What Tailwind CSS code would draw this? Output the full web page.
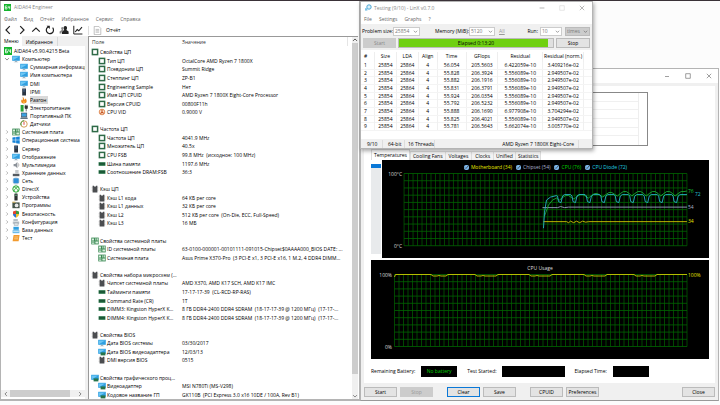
<!DOCTYPE html>
<html lang="ru">
<head>
    <meta charset="UTF-8">
    <meta name="viewport" content="width=device-width, initial-scale=1.0">
    <title>AIDA64 Engineer</title>
    <script src="https://cdn.jsdelivr.net/npm/@tailwindcss/browser@4"></script>
</head>
<body class="relative h-screen overflow-hidden border-t border-[#3a3238] bg-[#fcfcfc] font-['Open_Sans','Noto_Sans',sans-serif] text-[5px] leading-[8px] text-black">

    <!-- icons -->
    <svg class="hidden" aria-hidden="true">
        <symbol id="logo" viewBox="0 0 8 8"><rect width="8" height="8" fill="#14b42c"/><path d="M3.4 2.2H1.5v3.6h1.9V4H1.5M4.8 2.2V4.2H6.8M6.6 2.2V6" fill="none" stroke="#fff" stroke-width=".8"/></symbol>
        <symbol id="cpu" viewBox="0 0 8 8"><rect x="1.4" y="1.4" width="5.2" height="5.2" fill="#fff" stroke="#2f6b48" stroke-width="1.5"/></symbol>
        <symbol id="vid" viewBox="0 0 8 8"><circle cx="4" cy="4" r="2.8" fill="#fbe3cf" stroke="#d9763a" stroke-width=".8"/><path d="M4 1.8v2.4L2.4 5.6M4 4.2l1.8 1.2" fill="none" stroke="#c4501c" stroke-width="1.1"/></symbol>
        <symbol id="ram" viewBox="0 0 8 8"><rect x=".6" y="2.2" width="6.8" height="3.6" fill="#1f6d40"/><path d="M1.4 3.2h1.2v1.4H1.400zM3.400 3.200h1.200v1.400H3.400zM5.400 3.200h1.200v1.400H5.400z" fill="#173a2a"/></symbol>
        <symbol id="chip" viewBox="0 0 8 8"><path d="M1.600 .8H3v.8h2V.8h1.400v6.600H1.600z" fill="#4b4d50"/><path d="M1.600 2.400H.8M1.600 4H.8M1.600 5.600H.8M6.400 2.400h.8M6.400 4h.8M6.400 5.600h.8" stroke="#8c8c8c" stroke-width=".7"/></symbol>
        <symbol id="board" viewBox="0 0 8 8"><rect x=".3" y=".6" width="7.4" height="6.8" fill="#3c8a55"/><path d="M1 1.4h2v2H1zM4.4 1.2h1v2.4h-1zM6.2 1.2h.9v2.4h-.9zM1 4.6h2.4v.8H1zM1 6.1h2.4v.7H1zM4.4 4.6h2.7v2H4.4z" fill="#d9efdf"/></symbol>
        <symbol id="monitor" viewBox="0 0 8 8"><rect x=".2" y=".8" width="7.6" height="5" fill="#2f9fe0"/><path d="M.8 1.4h6.4L.8 5.2z" fill="#6cc6f4"/><path d="M3 5.8h2v.9h1.2v.6H1.8v-.6H3z" fill="#9fb3c0"/></symbol>
        <symbol id="gpu" viewBox="0 0 8 8"><rect x=".2" y=".8" width="7.6" height="5" fill="#2f9fe0"/><path d="M.8 1.4h6.4L.8 5.2z" fill="#6cc6f4"/><rect x="2.6" y="4.4" width="4.8" height="3" fill="#28744a"/></symbol>
        <symbol id="server" viewBox="0 0 8 8"><rect x="2.2" y=".5" width="3.8" height="7" fill="#2a3542"/><path d="M3 1.7h2.2M3 3h2.2" stroke="#5f88b8" stroke-width=".6"/></symbol>
        <symbol id="flame" viewBox="0 0 8 8"><path d="M2.6.8C4 2 4.2 3 4 4l1.6-1.6C7.4 4.4 7 7.4 4 7.4S.8 5 1.6 3.4l.9 1C3 3.2 3 2 2.6.8z" fill="#f08a1c"/><path d="M4 5c1 1 .8 2 0 2s-1.2-1 0-2z" fill="#ffd65a"/></symbol>
        <symbol id="power" viewBox="0 0 8 8"><rect x=".6" y="1" width="3" height="6.6" fill="#2ba33a"/><path d="M5 2h2.4v2.4H5zM5.3.8v1.4M7 .8v1.4M6.2 4v3.4" fill="#333" stroke="#333" stroke-width=".7"/></symbol>
        <symbol id="laptop" viewBox="0 0 8 8"><rect x="1.4" y="1" width="5.4" height="3.8" fill="#3aa0e0" stroke="#3b4f60" stroke-width=".6"/><path d="M1 5.2h6.2l.7 1.8H.2z" fill="#607484"/></symbol>
        <symbol id="sensor" viewBox="0 0 8 8"><circle cx="4" cy="4" r="3.2" fill="#fff" stroke="#c9862e" stroke-width=".8"/><path d="M1.1 5.4A3.2 3.2 0 0 1 4 .8" fill="none" stroke="#3c9a44"/><path d="M4 4.8V2" stroke="#d33" stroke-width=".9"/></symbol>
        <symbol id="windows" viewBox="0 0 8 8"><path d="M.4 1.5 3.6 1v2.8H.4zM4.1.9 7.7.4v3.4H4.1zM.4 4.3h3.2v2.8l-3.2-.5zM4.1 4.3h3.6v3.4l-3.6-.5z" fill="#1583d8"/></symbol>
        <symbol id="sound" viewBox="0 0 8 8"><path d="M1.6 3h1.6L5.4.9v6.4L3.2 5.2H1.6z" fill="#8c9299"/><path d="M6.4 2.4q1 1.6 0 3.2" fill="none" stroke="#888" stroke-width=".6"/></symbol>
        <symbol id="disk" viewBox="0 0 8 8"><path d="M3.2 1h3.4v3.4H3.2z" fill="#c4c8cc"/><path d="M.8 4.8h6.6v2.4H.8z" fill="#555b61"/></symbol>
        <symbol id="net" viewBox="0 0 8 8"><circle cx="4" cy="4" r="3.4" fill="#a9c4dc"/><rect x="1.6" y="1.4" width="5" height="4.6" fill="#2f8fd8"/></symbol>
        <symbol id="xbox" viewBox="0 0 8 8"><circle cx="4" cy="4" r="3.2" fill="#fff" stroke="#22a52c" stroke-width="1"/><path d="M2 6.2C2.4 4.6 3.6 3.2 4 3c.4.2 1.6 1.6 2 3.2M2 1.8 4 3l2-1.2" fill="none" stroke="#22a52c" stroke-width=".8"/></symbol>
        <symbol id="device" viewBox="0 0 8 8"><rect x="2.4" y=".5" width="3.2" height="7" rx=".6" fill="#2c3130"/><rect x="3.2" y="1.6" width="1.6" height="1.4" fill="#5ca07c"/></symbol>
        <symbol id="programs" viewBox="0 0 8 8"><rect x=".4" y="1.4" width="7.2" height="5.8" fill="#45544a"/><circle cx="4.6" cy="4.4" r="1.9" fill="#e8e8e8"/><path d="M.4 1.2h3" stroke="#caa64a"/></symbol>
        <symbol id="shield" viewBox="0 0 8 8"><path d="M4 .4 1 1.4V4h3z" fill="#e2452f"/><path d="M4 .4 7 1.4V4H4z" fill="#3a9b3e"/><path d="M1 4h3v3.8C2 6.8 1 5.6 1 4z" fill="#2c72cf"/><path d="M7 4H4v3.8C6 6.8 7 5.6 7 4z" fill="#f2c230"/></symbol>
        <symbol id="config" viewBox="0 0 8 8"><path d="M1.4 1h4.4v2H1.4zM.8 3.4h6.4v2.4H.8z" fill="#b6bfc6"/><path d="M2.2 5h4v2.4h-4z" fill="#dfe5e8" stroke="#8b979f" stroke-width=".5"/></symbol>
        <symbol id="database" viewBox="0 0 8 8"><path d="M1.4.8h5.4v3H1.4z" fill="#2f9fe0"/><path d="M.6 4.2h6.8v3H.6z" fill="#62b7ea"/><path d="M1.2 5.6h5.6" stroke="#fff" stroke-width=".6"/></symbol>
        <symbol id="bench" viewBox="0 0 8 8"><path d="M1.6 1h6L6.6 7.2H.6z" fill="#f29a2e"/><path d="M2.4 3h3.8M2.2 4.8H6" stroke="#fbd9a6" stroke-width=".7"/></symbol>
        <symbol id="right" viewBox="0 0 8 8"><path d="m3 1.8 2.2 2.2L3 6.2" fill="none" stroke="#999" stroke-width=".9"/></symbol>
        <symbol id="down" viewBox="0 0 8 8"><path d="m1.4 2.8 2.6 2.6 2.6-2.6" fill="none" stroke="#555" stroke-width=".9"/></symbol>
        <symbol id="up" viewBox="0 0 8 8"><path d="m1.4 5.2 2.6-2.6 2.6 2.6" fill="none" stroke="#444" stroke-width="1.2"/></symbol>
    </svg>

    <!-- AIDA64 -->
    <main class="absolute top-0 bottom-[4px] left-0 flex w-1/2 flex-col border-r border-b-2 border-l border-[#b4b4b4] bg-white pr-px">
        <header class="flex h-[12px] items-center gap-[3px] pl-[3px] text-[#888]">
            <svg class="size-[7px]"><use href="#logo"/></svg>
            <h1>AIDA64 Engineer</h1>
        </header>
        <nav class="flex h-[11px] items-center gap-[7px] pl-[3px] text-[#666]">
            <a href="#">Файл</a><a href="#">Вид</a><a href="#">Отчёт</a><a href="#">Избранное</a><a href="#">Сервис</a><a href="#">Справка</a>
        </nav>
        <div class="flex h-[12px] items-center pl-[2px]">
            <div class="flex gap-[4px] text-[#222]">
                <button aria-label="Назад"><svg class="size-[10px]" viewBox="0 0 10 10"><path d="M6.8 1.2 3 5l3.8 3.8" fill="none" stroke="currentColor" stroke-width="1.2"/></svg></button>
                <button aria-label="Вперёд"><svg class="size-[10px]" viewBox="0 0 10 10"><path d="M3.2 1.2 7 5 3.2 8.8" fill="none" stroke="currentColor" stroke-width="1.2"/></svg></button>
                <button aria-label="Вверх"><svg class="size-[10px]" viewBox="0 0 10 10"><path d="M1.2 6.6 5 3l3.8 3.6" fill="none" stroke="currentColor" stroke-width="1.2"/></svg></button>
                <button aria-label="Обновить"><svg class="size-[10px]" viewBox="0 0 10 10"><path d="M4 1.6A3.6 3.6 0 1 0 7.6 2.7" fill="none" stroke="currentColor" stroke-width="1.2"/><path d="M1.6.8h3.2V4z" fill="currentColor"/></svg></button>
                <button aria-label="Пользователь"><svg class="size-[10px]" viewBox="0 0 10 10"><path d="M6.2 1c1.6 0 2 1.2 1.8 2.6L7.4 5l2.2 1.4V9H3V6.6L5.2 5l-.6-1.6C4.5 2 5 1 6.2 1z" fill="#222"/><path d="M3.4 2c1 0 1.2 1 1 2L4 5l.8.6L2.6 7v1.6H.6V6.6L2.8 5l-.6-1.2C2 2.8 2.4 2 3.4 2z" fill="#888"/></svg></button>
                <button aria-label="График"><svg class="size-[10px]" viewBox="0 0 10 10"><path d="M.8.8v8.2h8.6" fill="none" stroke="currentColor" stroke-width="1"/><path d="m2.2 7 2-2.4 1.6 1.2L9 2.2" fill="none" stroke="currentColor" stroke-width="1.1"/></svg></button>
            </div>
            <button class="ml-[5px] flex items-center gap-[4px] border-l border-[#ddd] pl-[4px]">
                <svg class="size-[9px]" viewBox="0 0 9 9"><path d="M1.2.4h4.6l2 2v6.2H1.2z" fill="#fff" stroke="#999" stroke-width=".6"/><path d="M2.6 3.4h3.6M2.6 4.8h3.6M2.6 6.2h3.6" stroke="#999" stroke-width=".6"/></svg>
                Отчёт
            </button>
        </div>
        <div class="flex min-h-0 flex-1 gap-[3px] bg-[#f0f0f0]">
            <aside class="flex w-[84px] flex-col">
                <div class="flex h-[10px]" role="tablist">
                    <button role="tab" class="bg-white px-[3px]">Меню</button>
                    <button role="tab" class="mt-px border-r border-[#d9d9d9] px-[4px]">Избранное</button>
                </div>
                <div class="flex flex-1 flex-col justify-between overflow-hidden bg-white">
                    <ul id="tree" class="grid h-[196px] auto-rows-fr pt-px"></ul>
                    <div class="mb-[2px] flex h-[7px] items-center justify-between bg-[#f0f0f0] px-[2px]">
                        <svg class="size-[6px] rotate-90"><use href="#down"/></svg>
                        <span class="mr-auto ml-px h-full w-[60px] bg-[#cdcdcd]"></span>
                        <svg class="size-[6px] -rotate-90"><use href="#down"/></svg>
                    </div>
                </div>
            </aside>
            <section class="flex min-w-0 flex-1 border-t border-l border-[#999] bg-white">
                <table class="flex min-w-0 flex-1 flex-col">
                    <thead class="block h-[11px]">
                        <tr class="flex items-center text-left text-[#333]"><th class="w-[93px] pt-px pl-[3px] font-normal">Поле</th><th class="flex-1 border-r border-[#e5e5e5] pt-px font-normal">Значение</th><th class="w-[4px]"></th></tr>
                    </thead>
                    <tbody id="fields" class="grid min-h-0 flex-1 auto-rows-fr"></tbody>
                </table>
                <div class="flex w-[6px] flex-col items-center bg-[#f0f0f0]">
                    <svg class="size-[6px]"><use href="#up"/></svg>
                    <span class="h-[331px] w-full bg-[#cdcdcd]"></span>
                    <svg class="mt-auto size-[6px]"><use href="#down"/></svg>
                </div>
            </section>
        </div>
    </main>

    <!-- stability test -->
    <section class="absolute top-[67px] right-px bottom-[4px] left-1/2 flex flex-col border border-[#b4b4b4] border-b-[#999] bg-[#f0f0f0]">
        <header class="flex h-[14px] items-center justify-end gap-[15px] bg-white pr-[6px] text-[#777]">
            <button aria-label="Minimize"><svg class="size-[6px]" viewBox="0 0 6 6"><path d="M1 3.5h4" stroke="currentColor" stroke-width=".7"/></svg></button>
            <button aria-label="Maximize"><svg class="size-[6px]" viewBox="0 0 6 6"><path d="M.7.7h4.6v4.6H.7z" fill="none" stroke="currentColor" stroke-width=".7"/></svg></button>
            <button aria-label="Close"><svg class="size-[6px]" viewBox="0 0 6 6"><path d="m.8.8 4.4 4.4M5.2.8.8 5.2" stroke="currentColor" stroke-width=".7"/></svg></button>
        </header>
        <div class="mx-[3px] mt-[3px] flex flex-1 flex-col bg-white pl-[7px]">
            <div class="mt-[6px] mr-[67px] h-[54px] border border-[#888] pr-[8px]">
                <div class="grid h-full grid-rows-6 divide-y divide-[#f0f0f0] border-r border-[#eee]"><i></i><i></i><i></i><i></i><i></i><i></i></div>
            </div>
            <div class="mt-[3px] flex h-[11px] items-end" role="tablist">
                <button role="tab" class="h-[11px] border-x border-t border-[#ddd] bg-white px-[2px]">Temperatures</button>
                <button role="tab" class="h-[9px] border-x border-t border-[#ddd] bg-[#f3f3f3] px-[2px]">Cooling Fans</button>
                <button role="tab" class="h-[9px] border-r border-t border-[#ddd] bg-[#f3f3f3] px-[3px]">Voltages</button>
                <button role="tab" class="h-[9px] border-r border-t border-[#ddd] bg-[#f3f3f3] px-[3px]">Clocks</button>
                <button role="tab" class="h-[9px] border-r border-t border-[#ddd] bg-[#f3f3f3] px-[2px]">Unified</button>
                <button role="tab" class="h-[9px] border-r border-t border-[#ddd] bg-[#f3f3f3] px-[2px]">Statistics</button>
            </div>
            <div class="mr-[6px] flex">
                <div class="my-[4px] mr-px w-[10px] border-t-4 border-[#0a78d7] bg-[#e8eaec]"></div>
                <div class="flex-1 bg-black pt-[3px]">
                    <div class="flex h-[8px] items-center justify-center gap-[4px]">
                        <label class="flex items-center gap-[2px] text-[#e6e600]"><input type="checkbox" checked class="size-[5px] accent-[#7db8ee]">Motherboard (34)</label>
                        <label class="flex items-center gap-[2px] text-[#a9b0cc]"><input type="checkbox" checked class="size-[5px] accent-[#7db8ee]">Chipset (54)</label>
                        <label class="flex items-center gap-[2px] text-[#00d000]"><input type="checkbox" checked class="size-[5px] accent-[#7db8ee]">CPU (76)</label>
                        <label class="flex items-center gap-[2px] text-[#20d0e0]"><input type="checkbox" checked class="size-[5px] accent-[#7db8ee]">CPU Diode (72)</label>
                    </div>
                    <svg id="temps" class="block w-full" viewBox="383 171 326 87"></svg>
                </div>
            </div>
            <div class="mt-[2px] mr-[6px] bg-black">
                <svg id="usage" class="block w-full" viewBox="371 260 338 99"></svg>
            </div>
            <div class="flex flex-1 items-center">
                <span>Remaining Battery:</span><output class="ml-[6px] h-[11px] w-[36px] bg-black pt-px text-center text-[#00d000]">No battery</output>
                <span class="ml-[10px]">Test Started:</span><output class="ml-[5px] h-[11px] w-[63px] bg-black"></output>
                <span class="ml-[10px]">Elapsed Time:</span><output class="ml-[6px] h-[11px] w-[36px] bg-black"></output>
            </div>
        </div>
        <footer class="flex h-[17px] items-center gap-[3px] px-[3px]">
            <button class="h-[10px] w-[33px] border border-[#bbb] bg-[#e3e3e3]">Start</button>
            <button disabled class="h-[10px] w-[33px] bg-[#ccc] text-[#999]">Stop</button>
            <button class="ml-[11px] h-[10px] w-[33px] border border-[#0a78d7] bg-[#e3e3e3]">Clear</button>
            <button class="h-[10px] w-[33px] border border-[#bbb] bg-[#e3e3e3]">Save</button>
            <button class="ml-[11px] h-[10px] w-[33px] border border-[#bbb] bg-[#e3e3e3]">CPUID</button>
            <button class="h-[10px] w-[33px] border border-[#bbb] bg-[#e3e3e3]">Preferences</button>
            <button class="ml-auto h-[10px] w-[33px] border border-[#bbb] bg-[#e3e3e3]">Close</button>
        </footer>
    </section>

    <!-- LinX -->
    <section class="absolute top-0 left-1/2 flex h-[148px] w-[233px] flex-col border border-[#b4b4b4] bg-white shadow-[1px_2px_4px_rgba(0,0,0,0.35)]">
        <header class="flex h-[12px] items-center pr-[7px] pl-[3px] text-[#888]">
            <svg class="mr-[2px] size-[8px]" viewBox="0 0 8 8"><circle cx="5" cy="3" r="2.2" fill="#d8effa" stroke="#3f9fd0" stroke-width=".9"/><path d="M1 4.2h2.4v2.4H1z" fill="#7cc2e6"/></svg>
            <h2 class="mr-auto">Testing (9/10) - LinX v0.7.0</h2>
            <button aria-label="Minimize" class="mr-[14px]"><svg class="size-[6px]" viewBox="0 0 6 6"><path d="M.6 3h4.8" stroke="#999" stroke-width=".7"/></svg></button>
            <button aria-label="Maximize" disabled class="mr-[14px]"><svg class="size-[6px]" viewBox="0 0 6 6"><path d="M.7.7h4.6v4.6H.7z" fill="none" stroke="#ddd" stroke-width=".7"/></svg></button>
            <button aria-label="Close"><svg class="size-[6px]" viewBox="0 0 6 6"><path d="m.8.8 4.4 4.4M5.2.8.8 5.2" stroke="#999" stroke-width=".7"/></svg></button>
        </header>
        <nav class="flex h-[10px] items-center gap-[7px] pl-[3px] text-[#666]">
            <a href="#">File</a><a href="#">Settings</a><a href="#">Graphs</a><a href="#">?</a>
        </nav>
        <div class="flex h-[14px] items-center bg-[#f0f0f0] pr-[2px] pl-px">
            <label for="size" class="w-[31px] whitespace-nowrap">Problem size:</label>
            <div class="relative"><select id="size" class="block h-[9px] w-[27px] appearance-none border border-[#ccc] bg-white pl-px leading-[7px] text-[#777]"><option>25854</option></select><svg class="absolute top-[2px] right-[2px] size-[5px]"><use href="#down"/></svg></div>
            <label for="memory" class="ml-[15px] w-[34px] whitespace-nowrap">Memory (MiB):</label>
            <div class="relative"><select id="memory" class="block h-[9px] w-[26px] appearance-none border border-[#ccc] bg-white pl-px leading-[7px] text-[#777]"><option>5120</option></select><svg class="absolute top-[2px] right-[2px] size-[5px]"><use href="#down"/></svg></div>
            <a href="#" class="ml-[4px] text-[#999] underline">All</a>
            <label for="run" class="mr-[2px] ml-auto">Run:</label>
            <div class="relative"><select id="run" class="block h-[9px] w-[22px] appearance-none border border-[#ccc] bg-white pl-px leading-[7px] text-[#777]"><option>10</option></select><svg class="absolute top-[2px] right-[2px] size-[5px]"><use href="#down"/></svg></div>
            <div class="relative ml-[3px]"><select aria-label="Run unit" disabled class="block h-[9px] w-[25px] appearance-none border border-[#bbb] bg-[#ccc] pl-px leading-[7px] text-[#777] opacity-100"><option>times</option></select><svg class="absolute top-[2px] right-[2px] size-[5px]"><use href="#down"/></svg></div>
        </div>
        <div class="flex h-[12px] gap-[2px] bg-[#f0f0f0] px-[2px] pb-[2px]">
            <button disabled class="w-[33px] bg-[#ccc] text-[#888]">Start</button>
            <div role="progressbar" aria-valuenow="97" class="relative flex-1 border border-[#bbb] bg-[#e0e0e0]">
                <div class="h-full w-[97%] bg-[#6fd010]"></div>
                <span class="absolute inset-0 text-center">Elapsed 0:13:20</span>
            </div>
            <button class="w-[34px] border border-[#bbb] bg-[#e3e3e3]">Stop</button>
        </div>
        <table class="flex min-h-0 flex-1 flex-col pb-[8px]">
            <thead class="block">
                <tr class="grid h-[12px] grid-cols-[14fr_22fr_22fr_19fr_29fr_32fr_45fr_41fr_8fr] divide-x divide-[#eee] pt-[2px]"><th class="pl-[3px] text-left font-normal">#</th><th class="font-normal">Size</th><th class="font-normal">LDA</th><th class="font-normal">Align</th><th class="font-normal">Time</th><th class="font-normal">GFlops</th><th class="font-normal">Residual</th><th class="font-normal whitespace-nowrap">Residual (norm.)</th><th></th></tr>
            </thead>
            <tbody id="runs" class="grid min-h-0 flex-1 auto-rows-fr"></tbody>
        </table>
        <footer class="flex h-[9px] items-center bg-[#f0f0f0] pr-[13px]">
            <span class="w-[22px] border-r border-[#ddd] pl-[6px]">9/10</span>
            <span class="w-[22px] border-r border-[#ddd] pl-[5px] whitespace-nowrap">64-bit</span>
            <span class="w-[30px] border-r border-[#ddd] pl-[3px] whitespace-nowrap">16 Threads</span>
            <span class="ml-auto border-r border-[#ddd] pr-[4px]">AMD Ryzen 7 1800X Eight-Core</span>
        </footer>
    </section>

    <script>
        // [level, icon, label, open state]
        const tree = [
            [0, 'logo', 'AIDA64 v5.90.4215 Beta'], [1, 'monitor', 'Компьютер', 'down'],
            [2, 'monitor', 'Суммарная информация'], [2, 'monitor', 'Имя компьютера'], [2, 'monitor', 'DMI'],
            [2, 'server', 'IPMI'], [2, 'flame', 'Разгон'], [2, 'power', 'Электропитание'],
            [2, 'laptop', 'Портативный ПК'], [2, 'sensor', 'Датчики'],
            [1, 'board', 'Системная плата', 'right'], [1, 'windows', 'Операционная система', 'right'],
            [1, 'server', 'Сервер', 'right'], [1, 'monitor', 'Отображение', 'right'],
            [1, 'sound', 'Мультимедиа', 'right'], [1, 'disk', 'Хранение данных', 'right'],
            [1, 'net', 'Сеть', 'right'], [1, 'xbox', 'DirectX', 'right'], [1, 'device', 'Устройства', 'right'],
            [1, 'programs', 'Программы', 'right'], [1, 'shield', 'Безопасность', 'right'],
            [1, 'config', 'Конфигурация', 'right'], [1, 'database', 'База данных', 'right'], [1, 'bench', 'Тест', 'right']
        ];
        const indent = ['pl-[3px]', 'pl-[3px]', 'pl-[19px]'];
        document.getElementById('tree').innerHTML = tree.map(([level, icon, label, state]) => `
            <li class="flex items-center whitespace-nowrap ${indent[level]}">
                ${state ? `<svg class="mr-[2px] size-[6px] shrink-0"><use href="#${state}"/></svg>` : ''}
                <svg class="mr-[2px] size-[8px] shrink-0"><use href="#${icon}"/></svg>
                <span class="${label === 'Разгон' ? 'bg-[#d9d9d9] pr-px' : ''}">${label}</span>
            </li>`).join('');

        // [icon, field, value]; no value = group heading, null = spacer
        const fields = [
            ['cpu', 'Свойства ЦП'],
            ['cpu', 'Тип ЦП', 'OctalCore AMD Ryzen 7 1800X'],
            ['cpu', 'Псевдоним ЦП', 'Summit Ridge'],
            ['cpu', 'Степпинг ЦП', 'ZP-B1'],
            ['cpu', 'Engineering Sample', 'Нет'],
            ['cpu', 'Имя ЦП CPUID', 'AMD Ryzen 7 1800X Eight-Core Processor'],
            ['cpu', 'Версия CPUID', '00800F11h'],
            ['vid', 'CPU VID', '0.9000 V'],
            null,
            ['cpu', 'Частота ЦП'],
            ['cpu', 'Частота ЦП', '4041.9 MHz'],
            ['cpu', 'Множитель ЦП', '40.5x'],
            ['cpu', 'CPU FSB', '99.8 MHz  (исходное: 100 MHz)'],
            ['ram', 'Шина памяти', '1197.6 MHz'],
            ['ram', 'Соотношение DRAM:FSB', '36:3'],
            null,
            ['chip', 'Кэш ЦП'],
            ['chip', 'Кэш L1 кода', '64 КБ per core'],
            ['chip', 'Кэш L1 данных', '32 КБ per core'],
            ['chip', 'Кэш L2', '512 КБ per core  (On-Die, ECC, Full-Speed)'],
            ['chip', 'Кэш L3', '16 МБ'],
            null,
            ['board', 'Свойства системной платы'],
            ['board', 'ID системной платы', '63-0100-000001-00101111-091015-Chipset$0AAAA000_BIOS DATE: ...'],
            ['board', 'Системная плата', 'Asus Prime X370-Pro  (3 PCI-E x1, 3 PCI-E x16, 1 M.2, 4 DDR4 DIMM...'],
            null,
            ['chip', 'Свойства набора микросхем (...'],
            ['chip', 'Чипсет системной платы', 'AMD X370, AMD K17 SCH, AMD K17 IMC'],
            ['ram', 'Тайминги памяти', '17-17-17-39  (CL-RCD-RP-RAS)'],
            ['ram', 'Command Rate (CR)', '1T'],
            ['ram', 'DIMM3: Kingston HyperX K...', '8 ГБ DDR4-2400 DDR4 SDRAM  (18-17-17-39 @ 1200 МГц)  (17-17-...'],
            ['ram', 'DIMM4: Kingston HyperX K...', '8 ГБ DDR4-2400 DDR4 SDRAM  (18-17-17-39 @ 1200 МГц)  (17-17-...'],
            null,
            ['chip', 'Свойства BIOS'],
            ['monitor', 'Дата BIOS системы', '03/30/2017'],
            ['gpu', 'Дата BIOS видеоадаптера', '12/03/13'],
            ['chip', 'DMI версия BIOS', '0515'],
            null,
            ['gpu', 'Свойства графического проц...'],
            ['gpu', 'Видеоадаптер', 'MSI N780Ti (MS-V298)'],
            ['gpu', 'Кодовое название ГП', 'GK110B  (PCI Express 3.0 x16 10DE / 100A, Rev B1)']
        ];
        document.getElementById('fields').innerHTML = fields.map(row => row ? `
            <tr class="flex items-center whitespace-pre">
                <td class="flex w-[93px] items-center gap-px ${row[2] ? 'pl-[9px]' : 'pl-[2px]'}"><svg class="size-[8px] shrink-0"><use href="#${row[0]}"/></svg>${row[1]}</td>
                <td>${row[2] || ''}</td>
            </tr>` : '<tr><td></td></tr>').join('');

        const runs = [
            ['56.054', '205.5603', '6.422059e-10', '3.409216e-02'],
            ['55.828', '206.3924', '5.556089e-10', '2.949507e-02'],
            ['55.882', '206.1916', '5.556089e-10', '2.949507e-02'],
            ['55.831', '206.3791', '5.556089e-10', '2.949507e-02'],
            ['55.924', '206.0354', '5.556089e-10', '2.949507e-02'],
            ['55.792', '206.5232', '5.556089e-10', '2.949507e-02'],
            ['55.888', '206.1690', '6.977908e-10', '3.704294e-02'],
            ['55.825', '206.4021', '5.556089e-10', '2.949507e-02'],
            ['55.781', '206.5643', '5.662074e-10', '3.005770e-02']
        ];
        document.getElementById('runs').innerHTML = runs.map((run, i) => `
            <tr class="grid grid-cols-[14fr_22fr_22fr_19fr_29fr_32fr_45fr_41fr_8fr] divide-x divide-[#f0f0f0] border-b border-[#f4f4f4] text-center leading-[7px]">
                <td class="pl-[3px] text-left">${i + 1}</td><td>25854</td><td>25864</td><td>4</td>${run.map(v => `<td>${v}</td>`).join('')}<td></td>
            </tr>`).join('');

        // chart helpers
        function grid(x0, y0, x1, y1, cols) {
            let d = '', h = '';
            for (let i = 0; i <= cols; i++) d += `M${x0 + (x1 - x0) * i / cols} ${y0}V${y1}`;
            for (let i = 0; i <= 10; i++) h += `M${x0} ${y0 + (y1 - y0) * i / 10}H${x1}`;
            return `<path d="${d}" stroke="#005800" stroke-width=".8"/><path d="${h}" stroke="#006400" stroke-width=".8"/>`;
        }
        const line = (d, color) => `<path d="${d}" fill="none" stroke="${color}" stroke-width=".9"/>`;
        const text = (x, y, s, color, anchor = 'start') => `<text x="${x}" y="${y}" fill="${color}" text-anchor="${anchor}">${s}</text>`;

        let diode = 'M544 228L545 212L547 200L551 197L557 195.5', cpu = 'M545 216L549 205L553 200L557 198';
        for (let i = 0; i < 9; i++) {
            const x = 560 + i * 14.4, rise = Math.min(i, 4);
            diode += `L${x - 2} 196L${x - 1} 201.5L${x + 1.5} 202.5L${x + 3} 196L${x + 5} 194.5L${x + 11} 194.5`;
            cpu += `L${x} ${200 - rise}L${x + 3} ${197.5 - rise}L${x + 6} ${195.5 - rise}L${x + 9} ${195.5 - rise}L${x + 12} ${197.5 - rise}`;
        }
        document.getElementById('temps').innerHTML = grid(405, 173.5, 687, 245.5, 63)
            + line('M543 207.5H558L561 206.5L565 207.5L569 207H687', '#9aa0c4')
            + line('M544 221.5H567L569 222.5L571 221L574 222.5L577 221L580 222.5L583 221L586 222L589 221.5H687', '#d0c800')
            + line(cpu.replace(/L[^L]*$/, 'L684 191.5L687 191'), '#18a838') + line(diode.replace(/L[^L]*$/, 'L687 194.5'), '#28b4c8')
            + text(403, 175.5, '100°C', '#ddd', 'end') + text(403, 247.5, '0°C', '#ddd', 'end')
            + text(688, 193, '76', '#18c838') + text(695, 196, '72', '#28c4d8')
            + text(688, 209, '54', '#a9b0cc') + text(688, 223, '34', '#e6e600');

        let load = 'M394.5 277L395.5 274.5';
        [431, 475, 529, 584, 634].forEach((x, i) => {
            const w = i ? 22 : 16;
            load += `H${x}l2 1.5h4l2-.5l2 .5H${x + w - 1}L${x + w + 1} 274.5`;
        });
        document.getElementById('usage').innerHTML = grid(394.5, 274.5, 687, 346.5, 65)
            + line(load + 'H687', '#c8c800')
            + text(540, 269.5, 'CPU Usage', '#ddd', 'middle')
            + text(392, 276.5, '100%', '#ddd', 'end') + text(392, 348.5, '0%', '#ddd', 'end')
            + text(688, 276.5, '100%', '#e6e600');
    </script>

</body>
</html>
